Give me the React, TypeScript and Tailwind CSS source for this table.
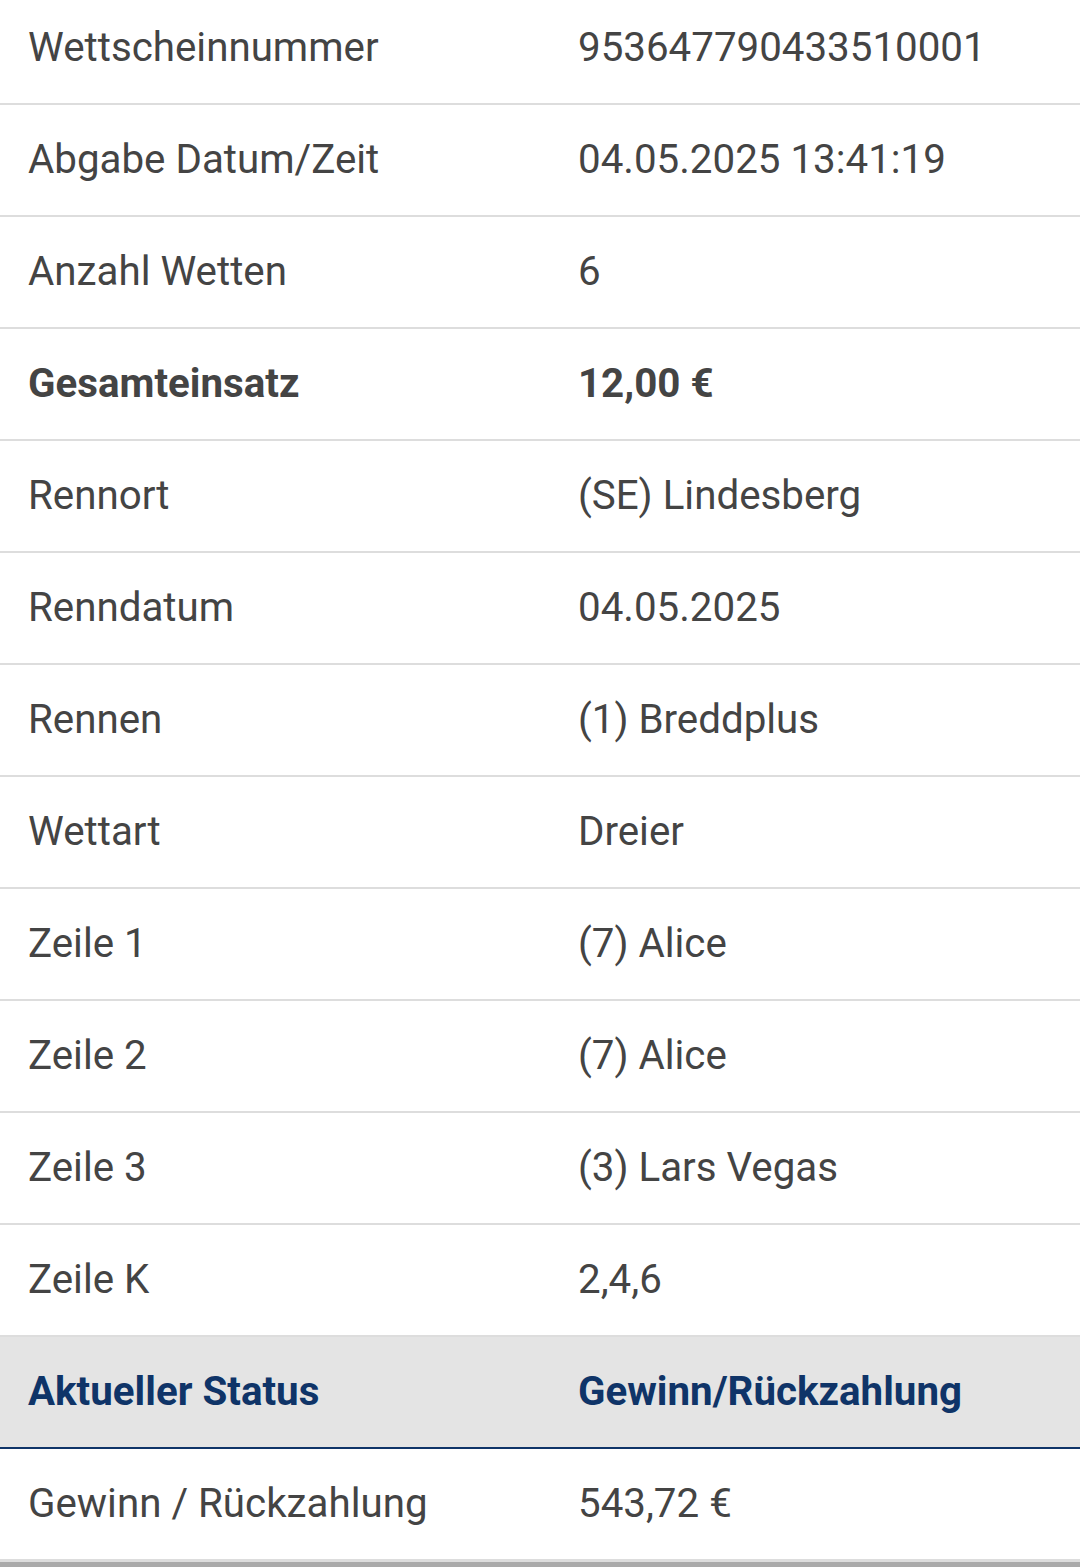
const rows: { label: string; value: string; bold?: boolean }[] = [
  { label: 'Wettscheinnummer', value: '953647790433510001' },
  { label: 'Abgabe Datum/Zeit', value: '04.05.2025 13:41:19' },
  { label: 'Anzahl Wetten', value: '6' },
  { label: 'Gesamteinsatz', value: '12,00 €', bold: true },
  { label: 'Rennort', value: '(SE) Lindesberg' },
  { label: 'Renndatum', value: '04.05.2025' },
  { label: 'Rennen', value: '(1) Breddplus' },
  { label: 'Wettart', value: 'Dreier' },
  { label: 'Zeile 1', value: '(7) Alice' },
  { label: 'Zeile 2', value: '(7) Alice' },
  { label: 'Zeile 3', value: '(3) Lars Vegas' },
  { label: 'Zeile K', value: '2,4,6' },
];

export default function App() {
  return (
    <div
      className="min-h-[1567px] bg-white overflow-hidden text-[40.3px] text-[#444444]"
      style={{ fontFamily: 'Roboto, "Liberation Sans", sans-serif' }}
    >
      <div className="-mt-[7px]">
        {/* Ticket details */}
        {rows.map((row) => (
          <div
            key={row.label}
            className={`grid grid-cols-[550px_1fr] h-[112px] items-center border-b-2 border-[#dddddd] ${row.bold ? 'font-bold' : ''}`}
          >
            <div className="px-7">{row.label}</div>
            <div className="px-7">{row.value}</div>
          </div>
        ))}

        {/* Status header */}
        <div className="grid grid-cols-[550px_1fr] h-[112px] items-center bg-[#e4e4e4] border-b-2 border-[#0f3468] font-bold text-[#0f3468]">
          <div className="px-7">Aktueller Status</div>
          <div className="px-7">Gewinn/Rückzahlung</div>
        </div>

        <div className="grid grid-cols-[550px_1fr] h-[113px] items-center border-b-[3px] border-[#dddddd]">
          <div className="px-7">Gewinn / Rückzahlung</div>
          <div className="px-7">543,72 €</div>
        </div>
        <div className="h-[20px] bg-[#aaaaaa]" />
      </div>
    </div>
  );
}
